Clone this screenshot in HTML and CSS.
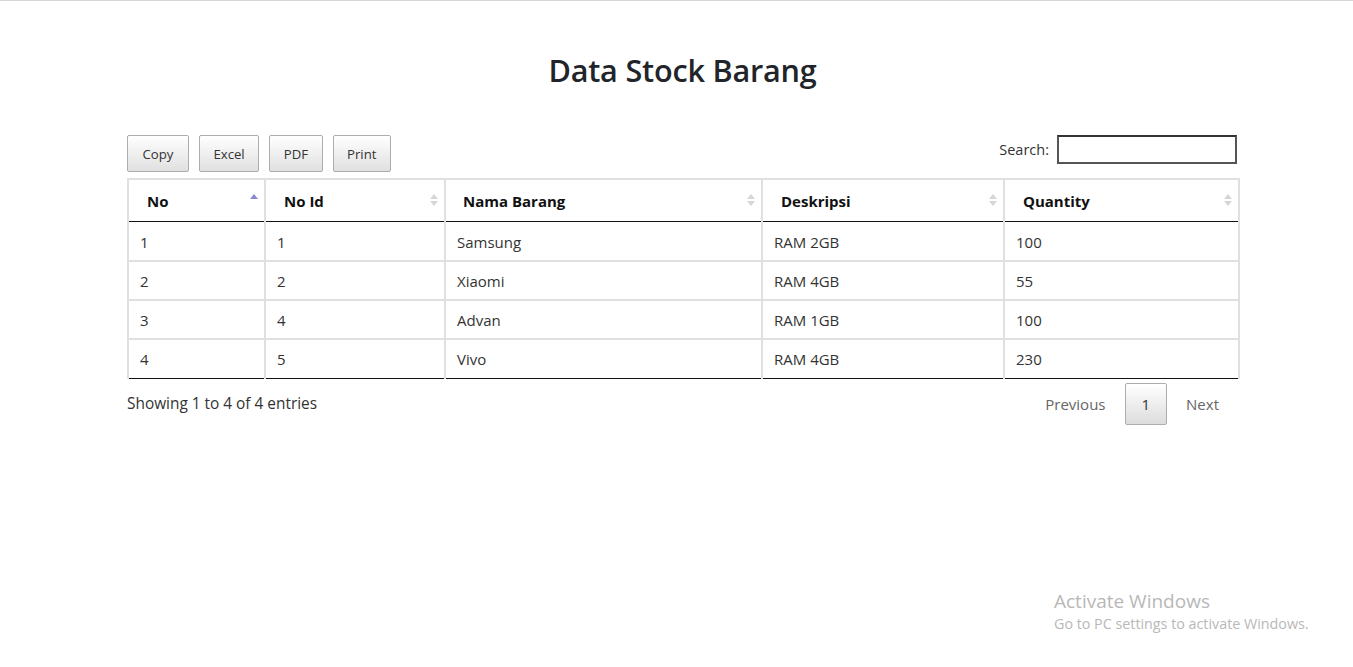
FILE: index.html
```html
<!DOCTYPE html>
<html>
<head>
<meta charset="utf-8">
<link rel="stylesheet" href="styles.css">
</head>
<body>
<div class="topline"></div>
<div class="container">
  <h1 class="title">Data Stock Barang</h1>
  <div class="toolbar">
    <div class="buttons">
      <button class="btn btn-copy">Copy</button>
      <button class="btn">Excel</button>
      <button class="btn">PDF</button>
      <button class="btn">Print</button>
    </div>
    <label class="search">Search: <input type="text" class="search-input"></label>
  </div>
  <table class="data">
    <colgroup>
      <col class="c1"><col class="c2"><col class="c3"><col class="c4"><col class="c5">
    </colgroup>
    <thead>
      <tr>
        <th class="p1"><span>No</span><i class="sort"><b class="up active"></b><b class="down hidden"></b></i></th>
        <th><span>No Id</span><i class="sort"><b class="up"></b><b class="down"></b></i></th>
        <th class="p2"><span>Nama Barang</span><i class="sort"><b class="up"></b><b class="down"></b></i></th>
        <th><span>Deskripsi</span><i class="sort"><b class="up"></b><b class="down"></b></i></th>
        <th><span>Quantity</span><i class="sort"><b class="up"></b><b class="down"></b></i></th>
      </tr>
    </thead>
    <tbody>
      <tr><td>1</td><td>1</td><td>Samsung</td><td>RAM 2GB</td><td>100</td></tr>
      <tr><td>2</td><td>2</td><td>Xiaomi</td><td>RAM 4GB</td><td>55</td></tr>
      <tr><td>3</td><td>4</td><td>Advan</td><td>RAM 1GB</td><td>100</td></tr>
      <tr><td>4</td><td>5</td><td>Vivo</td><td>RAM 4GB</td><td>230</td></tr>
    </tbody>
  </table>
  <div class="footer">
    <div class="info">Showing 1 to 4 of 4 entries</div>
    <div class="paging">
      <span class="pg">Previous</span>
      <span class="pg current">1</span>
      <span class="pg">Next</span>
    </div>
  </div>
</div>
<div class="watermark">
  <div class="wm1">Activate Windows</div>
  <div class="wm2">Go to PC settings to activate Windows.</div>
</div>
</body>
</html>
```
FILE: styles.css
```css
html, body {
  margin: 0;
  padding: 0;
  background: #fff;
}
body {
  font-family: "Open Sans", "Noto Sans", sans-serif;
  font-size: 15px;
  color: #333;
  position: relative;
  height: 667px;
  overflow: hidden;
}
.topline {
  height: 1px;
  background: #d6d6d6;
}
.container {
  width: 1111px;
  margin: 0 auto 0 127px;
}
.title {
  margin: 48px 0 0;
  text-align: center;
  font-size: 30.6px;
  font-weight: 600;
  color: #212529;
  line-height: 42px;
  letter-spacing: -0.2px;
}
.toolbar {
  display: flex;
  justify-content: space-between;
  align-items: flex-start;
  margin-top: 44px;
}
.buttons {
  display: flex;
  gap: 10px;
}
.btn {
  font-family: "Open Sans", "Noto Sans", sans-serif;
  font-size: 13.2px;
  color: #333;
  height: 37px;
  padding: 0 13.5px;
  border: 1px solid #adadad;
  border-radius: 2px;
  background: linear-gradient(#fff, #e0e0e0);
}
.btn-copy { padding: 0 14.5px; }
.search {
  display: flex;
  align-items: center;
  gap: 8px;
  font-size: 14.5px;
  color: #333;
  margin-right: 1px;
}
.search-input {
  width: 176px;
  height: 25px;
  border: 2px solid #555;
  border-top-color: #333;
  padding: 0;
  margin: 0;
}
.data {
  width: 1111px;
  margin-top: 6px;
  border-collapse: collapse;
  table-layout: fixed;
  font-size: 15px;
}
.c1 { width: 137px; }
.c2 { width: 180px; }
.c3 { width: 317px; }
.c4 { width: 242px; }
.c5 { width: 235px; }
.data th, .data td {
  border: 2px solid #e0e0e0;
  text-align: left;
}
.data thead th {
  height: 41px;
  padding: 0 18px;
  font-weight: 700;
  color: #111;
  border-bottom: 1px solid #111;
  position: relative;
}
.data thead th.p2 { padding-left: 17px; }
.data tbody td {
  height: 37px;
  padding: 0 11px;
  color: #333;
}
.data tbody tr:first-child td { border-top: none; height: 37px; padding-top: 1px; }
.data tbody tr:last-child td { border-bottom: 1px solid #111; height: 38px; }
.sort {
  position: absolute;
  right: 6px;
  top: 14px;
  display: flex;
  flex-direction: column;
  gap: 2px;
}
.sort b {
  display: block;
  width: 0;
  height: 0;
  border-left: 4px solid transparent;
  border-right: 4px solid transparent;
}
.sort .up { border-bottom: 5px solid #d6d6d6; }
.sort .down { border-top: 5px solid #d6d6d6; }
.sort .up.active { border-bottom-color: #8a87cf; }
.sort .hidden { visibility: hidden; }
.footer {
  display: flex;
  justify-content: space-between;
  align-items: flex-start;
  margin-top: 4px;
}
.info {
  font-size: 15.4px;
  color: #333;
  padding-top: 10px;
}
.paging {
  display: flex;
  align-items: center;
  margin-right: 0;
  gap: 0;
}
.pg {
  font-size: 15px;
  color: #666;
  padding: 0 19px;
  height: 40px;
  line-height: 40px;
}
.pg:first-child { padding-left: 20px; }
.pg.current {
  color: #333;
  border: 1px solid #adadad;
  border-radius: 2px;
  background: linear-gradient(#fff, #dcdcdc);
  padding: 0 16px;
}
.watermark {
  position: absolute;
  left: 1054px;
  top: 588px;
  color: #b8b8b8;
}
.wm1 {
  font-size: 19px;
  line-height: 26px;
}
.wm2 {
  font-size: 14.3px;
  line-height: 20px;
}
```
